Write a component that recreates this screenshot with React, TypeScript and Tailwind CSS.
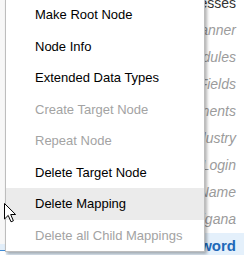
const menuItems = [
  { label: "Make Root Node", disabled: false },
  { label: "Node Info", disabled: false },
  { label: "Extended Data Types", disabled: false },
  { label: "Create Target Node", disabled: true },
  { label: "Repeat Node", disabled: true },
  { label: "Delete Target Node", disabled: false },
  { label: "Delete Mapping", disabled: false, active: true },
  { label: "Delete all Child Mappings", disabled: true },
];

const pageRows = [
  { label: "Business Processes", kind: "plain" },
  { label: "Planner", kind: "hint" },
  { label: "Modules", kind: "hint" },
  { label: "Custom Fields", kind: "hint" },
  { label: "Departments", kind: "hint" },
  { label: "Industry", kind: "hint" },
  { label: "Login", kind: "hint" },
  { label: "User Name", kind: "hint" },
  { label: "Vigana", kind: "hint" },
  { label: "New Password", kind: "selected" },
];

function Cursor() {
  return (
    <svg
      className="absolute left-[3px] top-[202px]"
      width="14"
      height="22"
      viewBox="0 0 14 22"
    >
      <path
        d="M1.5 1.5 L1.5 17 L5.2 13.4 L8 19.8 L10.4 18.8 L7.7 12.5 L12.6 12.5 Z"
        fill="#fff"
        stroke="#000"
        strokeWidth="1"
        strokeLinejoin="miter"
      />
    </svg>
  );
}

export default function App() {
  return (
    <div className="relative flex w-[244px] h-[255px] overflow-hidden bg-white font-['Liberation_Sans',Arial,sans-serif]">
      {/* left tree strip */}
      <div className="flex w-[6px] shrink-0 flex-col bg-[#f7f7f7]">
        <div className="flex-1" />
        <div className="h-[6px] bg-[#e2eef9]" />
        <div className="h-px bg-[#3f8bd6]" />
        <div className="h-[4px] bg-white" />
      </div>

      {/* page behind the menu */}
      <div className="-mt-[10px] flex flex-1 flex-col">
        {pageRows.map((row) => (
          <div
            key={row.label}
            className={
              "flex h-[27px] shrink-0 items-center justify-end pr-[8px] " +
              (row.kind === "selected" ? "bg-[#e4f0fb]" : "")
            }
          >
            {row.kind === "plain" && (
              <span className="text-[14px] text-[#333]">{row.label}</span>
            )}
            {row.kind === "hint" && (
              <span className="text-[14px] italic text-[#9b9b9b]">{row.label}</span>
            )}
            {row.kind === "selected" && (
              <span className="text-[15px] font-bold text-[#2068b8]">{row.label}</span>
            )}
          </div>
        ))}
      </div>

      {/* context menu */}
      <div className="absolute left-[5px] top-[-2px] w-[200px] border border-[#bdbdbd] bg-white shadow-[2px_2px_3px_rgba(0,0,0,0.3)]">
        {menuItems.map((item) => (
          <div
            key={item.label}
            className={
              "flex h-[31.5px] items-center pl-[29px] text-[13px] " +
              (item.disabled ? "text-[#a3a3a3] " : "text-black ") +
              (item.active ? "bg-[#ebebeb]" : "")
            }
          >
            {item.label}
          </div>
        ))}
      </div>

      <Cursor />
    </div>
  );
}
